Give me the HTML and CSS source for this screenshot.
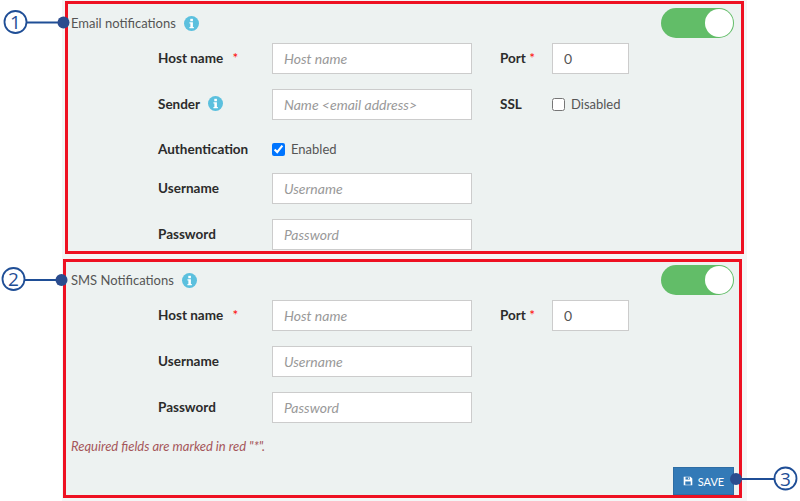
FILE: index.html
```html
<!DOCTYPE html>
<html>
	<head>
		<meta charset="UTF-8">
		<title>Notification settings</title>
		<link rel="stylesheet" href="styles.css">
	</head>
	<body>
		<svg width="0" height="0" class="defs">
			<symbol id="info" viewBox="0 0 16 16">
				<circle cx="8" cy="8" r="8" fill="#5bc0de"/>
				<rect x="6.7" y="3" width="2.8" height="2.6" fill="#fff"/>
				<path d="M5.8 6.7h3.7v5h1v1.4H5.8v-1.4h1v-3.6h-1z" fill="#fff"/>
			</symbol>
		</svg>

		<div class="page">
			<form class="panel panel-email" onsubmit="return false;">
				<div class="panel-head">
					<span class="panel-title">Email notifications</span>
					<svg class="info info-title"><use href="#info"/></svg>
					<span class="toggle"><span class="knob"></span></span>
				</div>
				<div class="fields">
					<div class="row">
						<label class="name">Host name <span class="star star-wide">*</span></label>
						<input class="text" type="text" placeholder="Host name">
						<label class="name name-side">Port <span class="star">*</span></label>
						<input class="text text-short" type="text" value="0">
					</div>
					<div class="row">
						<label class="name">Sender <svg class="info info-label"><use href="#info"/></svg></label>
						<input class="text" type="text" placeholder="Name <email address>">
						<label class="name name-side">SSL</label>
						<label class="check"><input type="checkbox"> Disabled</label>
					</div>
					<div class="row row-auth">
						<label class="name">Authentication</label>
						<label class="check"><input type="checkbox" checked> Enabled</label>
					</div>
					<div class="row">
						<label class="name">Username</label>
						<input class="text" type="text" placeholder="Username">
					</div>
					<div class="row">
						<label class="name">Password</label>
						<input class="text" type="text" placeholder="Password">
					</div>
				</div>
			</form>

			<form class="panel panel-sms" onsubmit="return false;">
				<div class="panel-head">
					<span class="panel-title">SMS Notifications</span>
					<svg class="info info-title"><use href="#info"/></svg>
					<span class="toggle"><span class="knob"></span></span>
				</div>
				<div class="fields">
					<div class="row">
						<label class="name">Host name <span class="star star-wide">*</span></label>
						<input class="text" type="text" placeholder="Host name">
						<label class="name name-side">Port <span class="star">*</span></label>
						<input class="text text-short" type="text" value="0">
					</div>
					<div class="row">
						<label class="name">Username</label>
						<input class="text" type="text" placeholder="Username">
					</div>
					<div class="row">
						<label class="name">Password</label>
						<input class="text" type="text" placeholder="Password">
					</div>
				</div>
				<p class="note">Required fields are marked in red "*".</p>
				<div class="actions">
					<button class="save" type="submit">
						<svg class="save-icon" viewBox="0 0 14 14"><path d="M1 1h9.5L13 3.5V13H1z" fill="#fff"/><rect x="3.5" y="1.8" width="6" height="3.2" fill="#337ab7"/><rect x="7.2" y="2.3" width="1.3" height="2.2" fill="#fff"/><rect x="3.2" y="7.6" width="7.6" height="4.6" fill="#337ab7"/></svg>
						SAVE
					</button>
				</div>
			</form>
		</div>

		<!-- numbered callouts drawn over the screenshot -->
		<svg class="callouts" width="800" height="501">
			<g class="callout-lines">
				<circle cx="15.5" cy="22" r="11"/>
				<line x1="27" y1="22.5" x2="62" y2="22.5"/>
				<circle cx="13.5" cy="279" r="11"/>
				<line x1="25" y1="280" x2="60" y2="280"/>
				<circle cx="785.5" cy="478.5" r="11"/>
				<line x1="737" y1="479" x2="774" y2="479"/>
			</g>
			<circle class="callout-dot" cx="63.5" cy="22.5" r="6"/>
			<circle class="callout-dot" cx="61.5" cy="280" r="6"/>
			<circle class="callout-dot" cx="736" cy="479" r="6"/>
			<text class="callout-num" x="15.5" y="29">1</text>
			<text class="callout-num" x="13.5" y="286">2</text>
			<text class="callout-num" x="785.5" y="485.5">3</text>
		</svg>
	</body>
</html>
```

FILE: styles.css
```css
html {
	background-color: #FFFFFF;
	font-family: "Lato", sans-serif;
	font-size: 13px;
	color: #2B2B2B;
}
body {
	margin: 0;
	height: 501px;
	overflow: hidden;
}
.defs {
	display: block;
	height: 0;
}
.page {
	width: 685px;
	margin-left: 62px;
	padding: 1px 0 3px 2px;
	box-sizing: border-box;
	background-color: #F4F6F6;
}
.panel {
	display: block;
	box-sizing: border-box;
	width: 679px;
	border: 3px solid #EE1122;
	background-color: #EDF2F1;
}
.panel-email {
	height: 253px;
	margin-left: 1px;
}
.panel-sms {
	height: 239px;
	margin-top: 5px;
	margin-left: -1px;
}
.panel-head {
	display: flex;
	align-items: center;
	height: 38px;
	padding: 0 7px 0 3px;
	box-sizing: border-box;
	color: #555555;
}
.panel-sms .panel-head {
	height: 36px;
	margin-bottom: 2px;
	padding: 0 5px 0 5px;
}
.panel-title {
	margin-right: 8px;
}
.info {
	display: inline-block;
	width: 15px;
	height: 15px;
	vertical-align: -2px;
}
.info-label {
	margin-left: 5px;
}
.toggle {
	position: relative;
	display: block;
	width: 73px;
	height: 30px;
	margin-left: auto;
	border-radius: 15px;
	background-color: #62BD68;
}
.knob {
	position: absolute;
	right: 1px;
	top: 1px;
	width: 28px;
	height: 28px;
	border-radius: 50%;
	background-color: #FFFFFF;
}
.fields {
	display: flex;
	flex-direction: column;
	gap: 15px;
	padding-left: 90px;
}
.panel-sms .fields {
	padding-left: 92px;
}
.row {
	display: flex;
	align-items: center;
	height: 31px;
}
.row-auth {
	align-items: flex-end;
	height: 23px;
}
.panel-email .fields {
	margin-top: 1px;
}
.name {
	display: block;
	flex: none;
	width: 114px;
	font-size: 13.5px;
	font-weight: 700;
	margin-top: -2px;
}
.row-auth .name {
	margin-bottom: 1px;
}
.name-side {
	width: 52px;
	margin-left: 28px;
}
.star {
	color: #FF0000;
	font-weight: 400;
}
.star-wide {
	margin-left: 6px;
}
.text {
	flex: none;
	width: 200px;
	height: 31px;
	padding: 0 11px;
	box-sizing: border-box;
	border: 1px solid #CCCCCC;
	background-color: #FFFFFF;
	font-family: inherit;
	font-size: 14px;
	color: #555555;
}
.text::placeholder {
	font-style: italic;
	color: #999999;
}
.text-short {
	width: 77px;
}
.check {
	display: flex;
	align-items: center;
	gap: 6px;
	color: #555555;
	margin-top: -1px;
}
.row-auth .check {
	margin-bottom: 1px;
}
.check input {
	margin: 0;
	width: 13px;
	height: 13px;
}
.note {
	margin: 15px 0 0 5px;
	font-style: italic;
	color: #A5565A;
}
.actions {
	display: flex;
	justify-content: flex-end;
	margin-top: 13px;
	padding-right: 5px;
}
.save {
	display: flex;
	align-items: center;
	justify-content: center;
	gap: 5px;
	width: 61px;
	height: 28px;
	padding: 0;
	border: 1px solid #2E6DA4;
	background-color: #337AB7;
	font-family: inherit;
	font-size: 11px;
	font-weight: 400;
	color: #FFFFFF;
}
.save-icon {
	width: 10px;
	height: 10px;
}
.callouts {
	position: absolute;
	left: 0;
	top: 0;
	pointer-events: none;
}
.callout-lines {
	fill: #FFFFFF;
	stroke: #1F4E96;
	stroke-width: 1.8;
}
.callout-dot {
	fill: #2B4C8E;
}
.callout-num {
	font-family: "Open Sans", sans-serif;
	font-weight: 400;
	font-size: 19px;
	text-anchor: middle;
	fill: #1F4E96;
}
```
